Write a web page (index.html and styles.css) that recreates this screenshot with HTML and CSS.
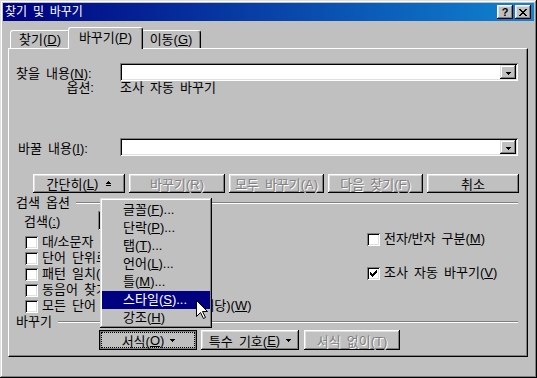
FILE: index.html
```html
<!DOCTYPE html>
<html lang="ko">
<head>
<meta charset="utf-8">
<title>찾기 및 바꾸기</title>
<link rel="stylesheet" href="styles.css">
</head>
<body>
<div class="window">
  <div class="titlebar">
    <span class="title">찾기 및 바꾸기</span>
    <div class="tbtns">
      <span class="tbtn help">?</span>
      <span class="tbtn close"><svg width="8" height="7" viewBox="0 0 8 7" shape-rendering="crispEdges"><path d="M0 0h2v1h-2z M6 0h2v1h-2z M1 1h2v1h-2z M5 1h2v1h-2z M2 2h4v1h-4z M3 3h2v1h-2z M2 4h4v1h-4z M1 5h2v1h-2z M5 5h2v1h-2z M0 6h2v1h-2z M6 6h2v1h-2z" fill="#000"/></svg></span>
    </div>
  </div>
  <div class="dlg">
    <div class="tabs">
      <div class="tab t1">찾기(<u>D</u>)</div>
      <div class="tab active">바꾸기(<u>P</u>)</div>
      <div class="tab t3">이동(<u>G</u>)</div>
    </div>
    <div class="panel">
      <div class="field-row r-find">
        <span class="lbl">찾을 내용(<u>N</u>):</span>
        <div class="combo wide"><span class="combo-btn"><svg width="5" height="3" viewBox="0 0 5 3" shape-rendering="crispEdges"><path d="M0 0h5v1h-5z M1 1h3v1h-3z M2 2h1v1h-1z" fill="#000"/></svg></span></div>
      </div>
      <div class="opt-row">
        <span class="lbl opt-lbl">옵션:</span>
        <span>조사 자동 바꾸기</span>
      </div>
      <div class="field-row r-repl">
        <span class="lbl lbl2">바꿀 내용(<u>I</u>):</span>
        <div class="combo wide"><span class="combo-btn"><svg width="5" height="3" viewBox="0 0 5 3" shape-rendering="crispEdges"><path d="M0 0h5v1h-5z M1 1h3v1h-3z M2 2h1v1h-1z" fill="#000"/></svg></span></div>
      </div>
      <div class="btn-row top-btns">
        <div class="btn w92">간단히(<u>L</u>)<svg class="upico" width="5" height="5" viewBox="0 0 5 5" shape-rendering="crispEdges"><path d="M2 0h1v1h-1z M1 1h3v1h-3z M0 2h5v1h-5z M0 4h5v1h-5z" fill="#000"/></svg></div>
        <div class="btn dis w96">바꾸기(R)</div>
        <div class="btn dis w95">모두 바꾸기(A)</div>
        <div class="btn dis w95">다음 찾기(F)</div>
        <div class="btn w92">취소</div>
      </div>
      <div class="group g1"><span>검색 옵션</span><i class="etch"></i></div>
      <div class="search-row">
        <span class="search-lbl">검색(<u>:</u>)</span>
        <div class="combo small"></div>
      </div>
      <div class="checks">
        <div class="col left">
          <div class="chk"><span class="box"></span>대/소문자 구분(<u>H</u>)</div>
          <div class="chk"><span class="box"></span>단어 단위로(<u>Y</u>)</div>
          <div class="chk"><span class="box"></span>패턴 일치(<u>U</u>)</div>
          <div class="chk"><span class="box"></span>동음어 찾기(<u>K</u>)</div>
          <div class="chk"><span class="box"></span>모든 단어 형태 찾기(영어에 해당)(<u>W</u>)</div>
        </div>
        <div class="col right">
          <div class="chk"><span class="box"></span>전자/반자 구분(<u>M</u>)</div>
          <div class="chk c2"><span class="box"><svg width="13" height="13" viewBox="0 0 13 13" shape-rendering="crispEdges"><path d="M9 3h1v1h-1z M8 4h2v1h-2z M3 5h1v1h-1z M7 5h3v1h-3z M3 6h2v1h-2z M6 6h3v1h-3z M3 7h5v1h-5z M4 8h3v1h-3z M5 9h1v1h-1z" fill="#000"/></svg></span>조사 자동 바꾸기(<u>V</u>)</div>
        </div>
      </div>
      <div class="group g2"><span>바꾸기</span><i class="etch"></i></div>
      <div class="btn-row bottom-btns">
        <div class="btn pressed w98">서식(<u>O</u>)<svg class="dnico" width="5" height="3" viewBox="0 0 5 3" shape-rendering="crispEdges"><path d="M0 0h5v1h-5z M1 1h3v1h-3z M2 2h1v1h-1z" fill="#000"/></svg></div>
        <div class="btn w98">특수 기호(<u>E</u>)<svg class="dnico" width="5" height="3" viewBox="0 0 5 3" shape-rendering="crispEdges"><path d="M0 0h5v1h-5z M1 1h3v1h-3z M2 2h1v1h-1z" fill="#000"/></svg></div>
        <div class="btn dis w96 gap5">서식 없이(T)</div>
      </div>
    </div>
  </div>

  <div class="menu">
    <div class="mi">글꼴(<u>F</u>)...</div>
    <div class="mi">단락(<u>P</u>)...</div>
    <div class="mi">탭(<u>T</u>)...</div>
    <div class="mi">언어(<u>L</u>)...</div>
    <div class="mi">틀(<u>M</u>)...</div>
    <div class="mi sel">스타일(<u>S</u>)...</div>
    <div class="mi">강조(<u>H</u>)</div>
  </div>

  <svg class="cursor" width="12" height="20" viewBox="0 0 12 20">
    <path d="M0.5 0.5 V16.5 L4.5 12.5 L7.5 18.5 L9.5 17.5 L6.5 11.5 H11.5 Z" fill="#fff" stroke="#000" stroke-width="1"/>
  </svg>
</div>
</body>
</html>
```

FILE: styles.css
```css
* { box-sizing: border-box; }

html, body {
  margin: 0;
  padding: 0;
  background: #c0c0c0;
}

body {
  font-family: "Liberation Sans", "Noto Sans CJK KR", sans-serif;
  font-size: 13px;
  word-spacing: 2.5px;
  color: #000;
}

u { text-decoration: underline; text-underline-offset: 1px; }

.window {
  position: relative;
  width: 537px;
  height: 378px;
  padding: 3px;
  background: #c0c0c0;
  box-shadow: inset -1px -1px #000, inset 1px 1px #dfdfdf,
              inset -2px -2px #808080, inset 2px 2px #fff;
  overflow: hidden;
}

/* title bar */
.titlebar {
  height: 18px;
  display: flex;
  align-items: center;
  justify-content: space-between;
  padding: 0 3px 0 2px;
  background: linear-gradient(to right, #000080 0%, #1084d0 100%);
}
.title {
  color: #fff;
  line-height: 18px;
  font-size: 12px;
}
.tbtns { display: flex; gap: 2px; }
.tbtn {
  width: 16px;
  height: 14px;
  display: flex;
  align-items: center;
  justify-content: center;
  background: #c0c0c0;
  box-shadow: inset -1px -1px #000, inset 1px 1px #fff,
              inset -2px -2px #808080, inset 2px 2px #dfdfdf;
}
.tbtn.help {
  font-family: "Liberation Sans", Arial, sans-serif;
  font-weight: bold;
  font-size: 11px;
  line-height: 14px;
  padding-bottom: 1px;
}

/* dialog body */
.dlg { padding: 0 6px 0 5px; }

.tabs {
  display: flex;
  align-items: flex-end;
  height: 21px;
  margin-top: 6px;
  padding-left: 2px;
  position: relative;
  z-index: 2;
}
.tab {
  height: 18px;
  line-height: 16px;
  padding-top: 1px;
  text-align: center;
  white-space: nowrap;
  background: #c0c0c0;
  border-top: 1px solid #fff;
  border-left: 1px solid #fff;
  border-right: 1px solid #000;
  border-radius: 3px 3px 0 0;
  box-shadow: inset -1px 0 #808080;
}
.tab.t1 { width: 60px; }
.tab.t3 { width: 60px; border-left-color: transparent; }
.tab.active {
  position: relative;
  z-index: 3;
  width: 75px;
  height: 22px;
  line-height: 19px;
  padding-top: 0;
  margin: 0 -2px -1px -2px;
}

.panel {
  position: relative;
  z-index: 1;
  width: 520px;
  height: 309px;
  border-top: 1px solid #fff;
  border-left: 1px solid #fff;
  border-right: 1px solid #000;
  border-bottom: 1px solid #000;
  box-shadow: inset -1px -1px #808080;
  padding-left: 7px;
  display: flex;
  flex-direction: column;
}

.field-row {
  display: flex;
  align-items: center;
  height: 18px;
}
.r-find { margin-top: 14px; }
.r-repl { margin-top: 43px; }
.lbl { width: 104px; flex: none; white-space: nowrap; }
.lbl2 { padding-left: 2px; }

.combo {
  position: relative;
  height: 18px;
  background: #fff;
  box-shadow: inset 1px 1px #808080, inset -1px -1px #fff,
              inset 2px 2px #000, inset -2px -2px #dfdfdf;
}
.combo.wide {
  width: 398px;
  display: flex;
  justify-content: flex-end;
  padding: 2px;
}
.combo-btn {
  width: 16px;
  height: 14px;
  display: flex;
  align-items: center;
  justify-content: center;
  padding-top: 3px;
  background: #c0c0c0;
  box-shadow: inset -1px -1px #000, inset 1px 1px #dfdfdf,
              inset -2px -2px #808080, inset 2px 2px #fff;
}

.opt-row {
  display: flex;
  height: 14px;
  line-height: 14px;
  white-space: nowrap;
}
.opt-lbl { text-align: right; padding-right: 26px; }

/* buttons */
.btn-row { display: flex; gap: 4px; }
.top-btns { margin-top: 18px; margin-left: 17px; height: 19px; }
.bottom-btns { margin-top: 1px; margin-left: 83px; height: 20px; }
.btn {
  height: 100%;
  display: flex;
  align-items: center;
  justify-content: center;
  white-space: nowrap;
  background: #c0c0c0;
  box-shadow: inset -1px -1px #000, inset 1px 1px #fff,
              inset -2px -2px #808080, inset 2px 2px #dfdfdf;
}
.btn.dis {
  color: #808080;
  text-shadow: 1px 1px 0 #fff;
}
.btn.pressed {
  border: 1px solid #000;
  box-shadow: inset 1px 1px #808080, inset -1px -1px #808080;
  outline: 1px dotted #000;
  outline-offset: -3px;
  padding: 1px 0 0 1px;
}
.w92 { width: 92px; }
.w95 { width: 95px; }
.w96 { width: 96px; }
.w98 { width: 98px; }
.gap5 { margin-left: 1px; }
.upico { margin-left: 8px; margin-bottom: 1px; }
.dnico { margin-left: 6px; }

/* group headers */
.group {
  display: flex;
  align-items: center;
  height: 14px;
  line-height: 14px;
  margin-right: 9px;
  white-space: nowrap;
}
.g1 { margin-top: 3px; }
.g2 { margin-top: 1px; }
.etch {
  flex: 1;
  height: 2px;
  margin-left: 6px;
  border-top: 1px solid #808080;
  border-bottom: 1px solid #fff;
}

.search-row {
  display: flex;
  align-items: center;
  height: 19px;
  margin-top: 1px;
}
.search-lbl { width: 74px; margin-left: 8px; white-space: nowrap; }
.combo.small { width: 100px; height: 19px; }

/* checkboxes */
.checks {
  display: flex;
  margin-top: 4px;
  padding-left: 9px;
}
.col { display: flex; flex-direction: column; }
.col.left { width: 342px; }
.col.right { margin-top: -3px; }
.chk {
  display: flex;
  align-items: flex-start;
  height: 16px;
  line-height: 16px;
  white-space: nowrap;
}
.chk.c2 { margin-top: 18px; }
.box {
  flex: none;
  width: 13px;
  height: 13px;
  margin: 2px 4px 0 0;
  background: #fff;
  box-shadow: inset 1px 1px #808080, inset -1px -1px #fff,
              inset 2px 2px #000, inset -2px -2px #dfdfdf;
}
.box svg { display: block; }

/* popup menu */
.menu {
  position: absolute;
  left: 100px;
  top: 198px;
  width: 112px;
  height: 130px;
  padding: 3px 2px 2px;
  background: #c0c0c0;
  z-index: 10;
  box-shadow: inset -1px -1px #000, inset 1px 1px #dfdfdf,
              inset -2px -2px #808080, inset 2px 2px #fff;
}
.mi {
  height: 18px;
  line-height: 18px;
  padding-left: 21px;
  white-space: nowrap;
}
.mi.sel { background: #000080; color: #fff; }

.cursor {
  position: absolute;
  left: 196px;
  top: 300px;
  z-index: 11;
}
```
